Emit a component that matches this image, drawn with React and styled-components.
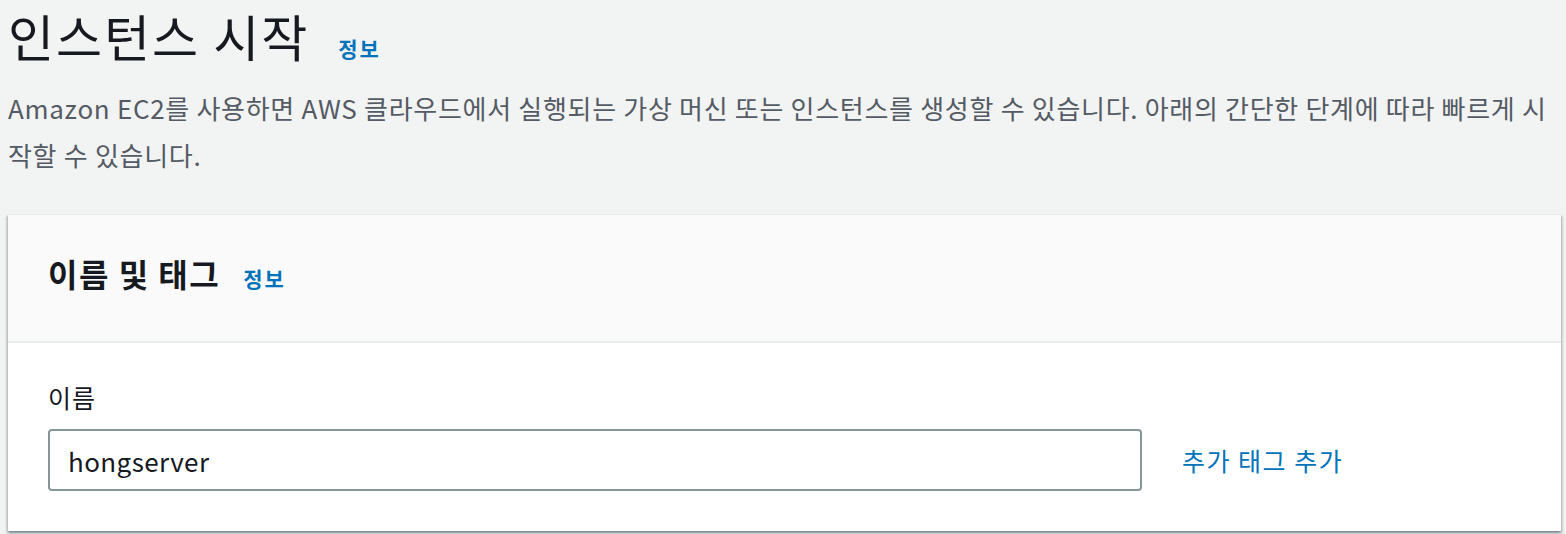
import React from "react";
import styled, { createGlobalStyle } from "styled-components";

const GlobalStyle = createGlobalStyle`
  html, body {
    margin: 0;
    padding: 0;
    background: #f2f3f3;
  }
  body {
    font-family: "Noto Sans CJK KR", "Noto Sans", sans-serif;
    color: #16191f;
  }
`;

const Page = styled.div`
  padding: 0 5px 0 8px;
  height: 534px;
  overflow: hidden;
`;

const TitleRow = styled.div`
  display: flex;
  align-items: baseline;
  gap: 29px;
  height: 70px;
`;

const Title = styled.h1`
  margin: 0;
  font-size: 50px;
  font-weight: 400;
  line-height: 70px;
  letter-spacing: 2px;
  color: #16191f;
`;

const InfoLink = styled.a`
  font-size: 21px;
  font-weight: 700;
  letter-spacing: 2px;
  color: #0073bb;
  text-decoration: none;
`;

const Description = styled.p`
  margin: 14px 0 0;
  font-size: 26px;
  line-height: 47px;
  letter-spacing: 0.7px;
  word-break: break-all;
  color: #545b64;
  max-width: 1550px;
`;

const Card = styled.section`
  margin-top: 36px;
  background: #fff;
  border-top: 1px solid #eaeded;
  box-shadow: 0 2px 2px 0 rgba(0, 28, 36, 0.3),
    2px 2px 2px 0 rgba(0, 28, 36, 0.15),
    -2px 2px 2px 0 rgba(0, 28, 36, 0.15);
`;

const CardHeader = styled.header`
  display: flex;
  align-items: baseline;
  gap: 23px;
  height: 128px;
  box-sizing: border-box;
  padding: 34px 40px 0;
  background: #fafafa;
  border-bottom: 2px solid #eaeded;
`;

const CardTitle = styled.h2`
  margin: 0;
  font-size: 32px;
  font-weight: 700;
  line-height: 48px;
  letter-spacing: 1.5px;
  color: #16191f;
`;

const CardBody = styled.div`
  padding: 38px 40px 40px;
`;

const Label = styled.label`
  display: block;
  font-size: 25px;
  line-height: 32px;
  letter-spacing: 1px;
  color: #16191f;
  margin-bottom: 16px;
`;

const FieldRow = styled.div`
  display: flex;
  align-items: center;
  gap: 40px;
`;

const TextInput = styled.input`
  width: 1094px;
  height: 62px;
  box-sizing: border-box;
  border: 2px solid #879596;
  border-radius: 4px;
  padding: 0 18px;
  font-family: "Noto Sans CJK KR", "Noto Sans", sans-serif;
  font-size: 26px;
  letter-spacing: 0.4px;
  color: #16191f;
  background: #fff;
  outline: none;
`;

const TagLink = styled.a`
  font-size: 25px;
  letter-spacing: 1.5px;
  color: #0073bb;
  text-decoration: none;
`;

export default function App() {
  return (
    <>
      <GlobalStyle />
      <Page>
        <TitleRow>
          <Title>인스턴스 시작</Title>
          <InfoLink>정보</InfoLink>
        </TitleRow>
        <Description>
          Amazon EC2를 사용하면 AWS 클라우드에서 실행되는 가상 머신 또는 인스턴스를 생성할 수 있습니다. 아래의 간단한 단계에 따라 빠르게 시작할 수 있습니다.
        </Description>
        <Card>
          <CardHeader>
            <CardTitle>이름 및 태그</CardTitle>
            <InfoLink>정보</InfoLink>
          </CardHeader>
          <CardBody>
            <Label>이름</Label>
            <FieldRow>
              <TextInput defaultValue="hongserver" />
              <TagLink>추가 태그 추가</TagLink>
            </FieldRow>
          </CardBody>
        </Card>
      </Page>
    </>
  );
}
